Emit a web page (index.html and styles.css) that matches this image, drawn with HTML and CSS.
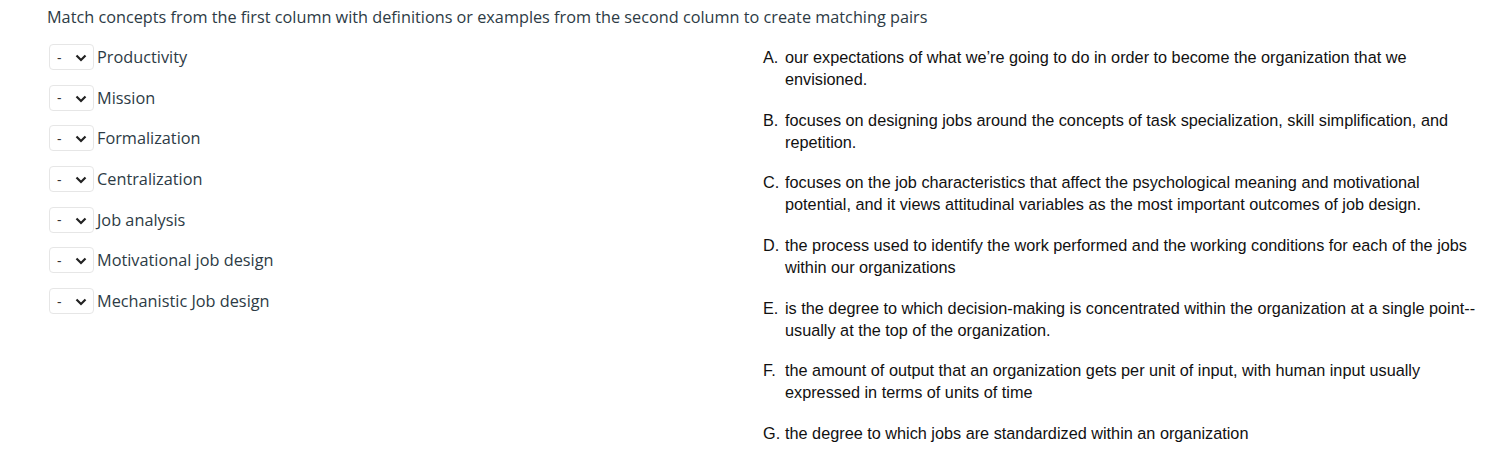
FILE: index.html
```html
<!DOCTYPE html>
<html lang="en">
<head>
<meta charset="utf-8">
<title>Matching</title>
<link rel="stylesheet" href="styles.css">
</head>
<body>
<div class="page">
  <p class="prompt">Match concepts from the first column with definitions or examples from the second column to create matching pairs</p>
  <div class="columns">
    <ul class="terms">
      <li class="term"><span class="pick"><select class="sel"><option>-</option></select><svg class="chev" viewBox="0 0 12 8" width="12" height="8"><path d="M1.5 1.5l4.5 4.5 4.5-4.5" fill="none" stroke="#222" stroke-width="2.2"/></svg></span><span class="label">Productivity</span></li>
      <li class="term"><span class="pick"><select class="sel"><option>-</option></select><svg class="chev" viewBox="0 0 12 8" width="12" height="8"><path d="M1.5 1.5l4.5 4.5 4.5-4.5" fill="none" stroke="#222" stroke-width="2.2"/></svg></span><span class="label">Mission</span></li>
      <li class="term"><span class="pick"><select class="sel"><option>-</option></select><svg class="chev" viewBox="0 0 12 8" width="12" height="8"><path d="M1.5 1.5l4.5 4.5 4.5-4.5" fill="none" stroke="#222" stroke-width="2.2"/></svg></span><span class="label">Formalization</span></li>
      <li class="term"><span class="pick"><select class="sel"><option>-</option></select><svg class="chev" viewBox="0 0 12 8" width="12" height="8"><path d="M1.5 1.5l4.5 4.5 4.5-4.5" fill="none" stroke="#222" stroke-width="2.2"/></svg></span><span class="label">Centralization</span></li>
      <li class="term"><span class="pick"><select class="sel"><option>-</option></select><svg class="chev" viewBox="0 0 12 8" width="12" height="8"><path d="M1.5 1.5l4.5 4.5 4.5-4.5" fill="none" stroke="#222" stroke-width="2.2"/></svg></span><span class="label">Job analysis</span></li>
      <li class="term"><span class="pick"><select class="sel"><option>-</option></select><svg class="chev" viewBox="0 0 12 8" width="12" height="8"><path d="M1.5 1.5l4.5 4.5 4.5-4.5" fill="none" stroke="#222" stroke-width="2.2"/></svg></span><span class="label">Motivational job design</span></li>
      <li class="term"><span class="pick"><select class="sel"><option>-</option></select><svg class="chev" viewBox="0 0 12 8" width="12" height="8"><path d="M1.5 1.5l4.5 4.5 4.5-4.5" fill="none" stroke="#222" stroke-width="2.2"/></svg></span><span class="label">Mechanistic Job design</span></li>
    </ul>
    <ol class="defs">
      <li class="def"><span class="letter">A.</span><span class="text">our expectations of what we’re going to do in order to become the organization that we envisioned.</span></li>
      <li class="def"><span class="letter">B.</span><span class="text">focuses on designing jobs around the concepts of task specialization, skill simplification, and repetition.</span></li>
      <li class="def"><span class="letter">C.</span><span class="text">focuses on the job characteristics that affect the psychological meaning and motivational potential, and it views attitudinal variables as the most important outcomes of job design.</span></li>
      <li class="def"><span class="letter">D.</span><span class="text">the process used to identify the work performed and the working conditions for each of the jobs within our organizations</span></li>
      <li class="def"><span class="letter">E.</span><span class="text">is the degree to which decision-making is concentrated within the organization at a single point--usually at the top of the organization.</span></li>
      <li class="def"><span class="letter">F.</span><span class="text">the amount of output that an organization gets per unit of input, with human input usually expressed in terms of units of time</span></li>
      <li class="def"><span class="letter">G.</span><span class="text">the degree to which jobs are standardized within an organization</span></li>
    </ol>
  </div>
</div>
</body>
</html>
```
FILE: styles.css
```css
html, body {
  margin: 0;
  padding: 0;
  background: #fff;
}
.page {
  padding: 6px 0 0 47px;
  font-family: "Open Sans", "Liberation Sans", sans-serif;
  color: #2d3b45;
}
.prompt {
  margin: 0;
  font-size: 16.25px;
  line-height: 22px;
  color: #2d3b45;
}
.columns {
  display: grid;
  grid-template-columns: 716px 720px;
  margin-top: 16px;
}
.terms {
  list-style: none;
  margin: 0;
  padding: 0 0 0 2px;
  display: flex;
  flex-direction: column;
  gap: 14.7px;
}
.term {
  display: flex;
  align-items: center;
  gap: 3px;
  height: 26px;
}
.pick {
  position: relative;
  display: inline-block;
  width: 45px;
  height: 26px;
}
.sel {
  appearance: none;
  -webkit-appearance: none;
  width: 45px;
  height: 26px;
  margin: 0;
  padding: 0 0 0 7px;
  border: 1px solid #e6e6e6;
  border-radius: 4px;
  background: #fff;
  font-family: "Open Sans", sans-serif;
  font-size: 14px;
  color: #333;
}
.chev {
  position: absolute;
  left: 26px;
  top: 10px;
  pointer-events: none;
}
.label {
  font-size: 16.3px;
  line-height: 22px;
  color: #2d3b45;
}
.defs {
  list-style: none;
  margin: 0;
  padding: 0;
  display: flex;
  flex-direction: column;
  gap: 18.67px;
  font-family: "Liberation Sans", Arial, sans-serif;
  font-size: 16.25px;
  line-height: 22px;
  color: #111;
  margin-top: 2px;
}
.def {
  display: flex;
}
.letter {
  flex: 0 0 22px;
}
.text {
  flex: 1;
}
```
